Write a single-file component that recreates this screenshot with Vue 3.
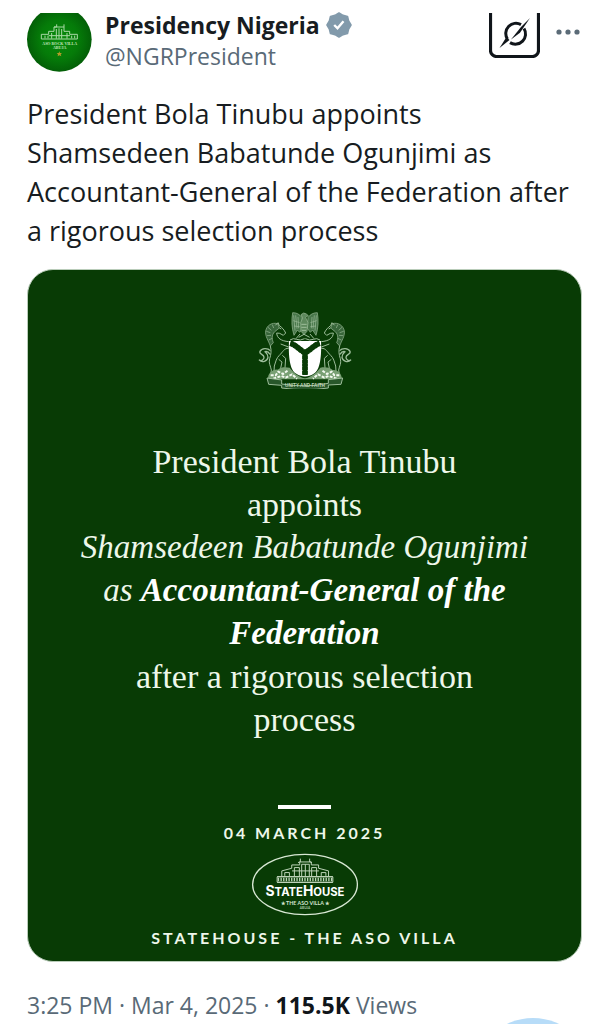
<template>
  <main class="page">
    <article>
      <header class="header">
        <svg class="avatar" viewBox="0 18 195 177" role="img" aria-label="Presidency Nigeria avatar">
          <defs>
            <radialGradient id="avatar-green">
              <stop offset="0" stop-color="#078b0b" />
              <stop offset="0.6" stop-color="#057b09" />
              <stop offset="1" stop-color="#035f07" />
            </radialGradient>
          </defs>
          <circle cx="97" cy="97" r="97" fill="url(#avatar-green)" />
          <g fill="none" stroke="#a9d8a5" stroke-width="3">
            <path d="M43 96V82h22v-9h16V60h8v-8M81 60h30V52M111 60v13h17v9h23v14" />
            <path d="M88 95V66M96 95V64M104 95V66M74 95V78M120 95V78M54 94v-8M63 94v-8M134 94v-8M143 94v-8" />
            <path d="M43 96h108M65 86h64" />
          </g>
          <text class="avatar-text" x="98" y="113">ASO ROCK VILLA</text>
          <text class="avatar-text" x="98" y="127">ABUJA</text>
          <path d="M97 133l2 5h6l-4 4 2 6-6-3-5 3 1-6-4-4h6z" fill="#b59a2a" />
        </svg>
        <div class="author">
          <div class="name-row">
            <strong class="name">Presidency Nigeria</strong>
            <svg class="badge" viewBox="0 0 26 26" role="img" aria-label="Verified">
              <path
                d="M13 1 17 3.4 21.5 4.5 22.6 9 25 13 22.6 17 21.5 21.5 17 22.6 13 25 9 22.6 4.5 21.5 3.4 17 1 13 3.4 9 4.5 4.5 9 3.4z"
                fill="#829aab" stroke="#829aab" stroke-width="1.6" stroke-linejoin="round"
              />
              <path d="m8.2 13 3.3 3.3 6-7" fill="none" stroke="#fff" stroke-width="2.4" />
            </svg>
          </div>
          <a class="handle" href="#">@NGRPresident</a>
        </div>
        <button class="icon-button" type="button" aria-label="Explain this post">
          <svg class="grok" viewBox="0 6 51 45">
            <rect x="1.5" y="-9" width="48" height="58.5" rx="6" fill="none" stroke="#10151a" stroke-width="3.2" />
            <path d="M32 17.6A10.2 10.2 0 0 0 18.4 32" fill="none" stroke="#10151a" stroke-width="3" />
            <path d="M35 21.5A10.2 10.2 0 0 1 21 35.6" fill="none" stroke="#10151a" stroke-width="3" />
            <path d="M41 11 31 25.8 22 32.5 32 20z" fill="#10151a" />
            <path d="M10.5 41 17.5 30 20.5 33z" fill="#10151a" />
          </svg>
        </button>
        <button class="icon-button more" type="button" aria-label="More">
          <svg class="dots" viewBox="0 0 24 6">
            <circle v-for="x in [3, 12, 21]" :key="x" :cx="x" cy="3" r="2.6" fill="#5b6b77" />
          </svg>
        </button>
      </header>

      <p class="text">
        President Bola Tinubu appoints<br />Shamsedeen Babatunde Ogunjimi as<br />Accountant-General of the Federation after<br />a rigorous selection process
      </p>

      <section class="card">
        <svg class="arms" viewBox="54 33 282 234" role="img" aria-label="Coat of arms of Nigeria">
          <g fill="none" stroke="#9dbd9a" stroke-width="3" stroke-linejoin="round">
            <!-- horses and wings, the right half mirrors the left -->
            <g v-for="side in sides" :key="side.name" :transform="side.transform">
              <path d="M186 52c-8-10-17-14-28-14-4 22-3 46 4 68l10-16 7 7 9-12z" fill="#48774a" stroke-width="2" />
              <path d="M161 46l4 46M167 46l4 40M174 51l2 34M160 62l19 6M162 78l17 2" stroke-width="2" />
              <path d="M180 102l-12 14M150 120q10-7 20-2t24-2" />
              <path d="M113 71c-18-5-33 6-36 22-2 16 8 28 14 45l9-10c-6-14-4-28 8-36l10-8z" fill="#38663a" stroke-width="2" />
              <path d="M84 82l10 9M79 94l12 4M81 107l12-1M86 120l11-5M97 74l4 10" stroke-width="2" />
              <path d="M106 76l8-8 4 9c8 5 15 13 19 22l-7 7-11-6-9-1c1 16 14 24 36 26M91 138c4 14 2 26-2 38-4 14 3 22 5 34l-3 20M146 145c-14-1-18 12-28 21-9 8-11 20-15 32l-2 32" />
              <path d="M118 84l6 3M127 166l10 9-2 28-6 16M116 178l10 8-6 28M122 132l24 9" />
              <path d="M91 152c-8-9-26-8-31 2-4 10 12 8 12 18 0 8-8 12-14 8 8 9 24 4 26-8 1-10-6-14-9-17 7-2 12 3 15 8" stroke-width="4" />
            </g>
            <path d="M183 44q8-9 16-2l6 5-8 5 7 16-3 26-9 10-9-10-1-26 6-14z" fill="#5e895d" stroke-width="2" />
            <path d="M184 73h16M184 82h16M186 91h12M176 112l16-9 17 9" />
          </g>
          <path d="M147 123h96c2 45-2 88-22 98-16 11-36 11-52 0-20-10-24-53-22-98z" fill="#fff" />
          <path d="M151 130c17 5 24 16 44 29 20-13 29-24 44-29M195 157v68" fill="none" stroke="#083b05" stroke-width="17" stroke-dasharray="10 1" />
          <path d="M151 130c17 5 24 16 44 29 20-13 29-24 44-29M195 157v68" fill="none" stroke="#083b05" stroke-width="14" />
          <!-- flowered ground -->
          <path d="M85 238c-4-16 13-31 28-29 11-9 24-8 36-6 9 12 23 27 46 32 23-5 37-20 46-32 15-2 28-1 37 7 15-2 29 12 27 28z" fill="#789f73" />
          <path d="M92 226h15l8-11 14 7 15-11M100 236l24-8 13 5 19-10 15 13M298 226h-15l-8-11-14 7-15-11M290 236l-24-8-13 5-19-10-15 13" fill="none" stroke="#f4faf1" stroke-width="6" stroke-dasharray="9 4" />
          <path d="M81 234l44 6v12q69 12 140-2v-11l43-5-5 19-38 2v9q-70 10-140 0v-8l-39-3z" fill="#28572a" stroke="#9dbd9a" stroke-width="3" />
          <text class="motto" x="195" y="261">UNITY AND FAITH</text>
        </svg>

        <p class="statement">
          President Bola Tinubu<br />appoints
          <em>Shamsedeen Babatunde Ogunjimi<br />as <strong>Accountant-General of the<br />Federation</strong></em>
          after a rigorous selection<br />process
        </p>

        <div class="rule"></div>
        <time class="label date" datetime="2025-03-04">04 MARCH 2025</time>

        <svg class="statehouse" viewBox="33 189 324 190" role="img" aria-label="StateHouse, The Aso Villa, Abuja">
          <ellipse cx="195" cy="284" rx="158" ry="91" fill="none" stroke="#d8e8d4" stroke-width="4" />
          <g fill="none" stroke="#bdd4b8" stroke-width="3">
            <path d="M111 277v-16h168v16zM125 260v-17l30-8v-10h24v-9h35v9h22v10l30 8v17" />
            <path d="M181 216v-10M209 216v-10M174 218l7-3M216 218l-7-3" />
            <path d="M163 260v-27h15v27M185 260v-37h23v37M215 260v-27h15v27M196 223v37M134 258v-10h14v10M244 258v-10h14v10M156 243h81" />
            <path d="M113 269h164" stroke-width="11" stroke-dasharray="4 4" />
            <path d="M111 278h168M111 260h168" />
          </g>
          <text class="brand" x="195" y="320"><tspan class="brand-cap">S</tspan>TATE<tspan class="brand-cap">H</tspan>OUSE</text>
          <text class="villa" x="195" y="345">★ THE ASO VILLA ★</text>
          <text class="abuja" x="195" y="358">ABUJA</text>
        </svg>

        <p class="label place">STATEHOUSE - THE ASO VILLA</p>
      </section>

      <footer class="meta">3:25 PM · Mar 4, 2025 · <strong>115.5K</strong> Views</footer>
    </article>
    <button class="compose" type="button" aria-label="Compose"></button>
  </main>
</template>

<script setup>
const sides = [
  { name: 'left', transform: '' },
  { name: 'right', transform: 'translate(390 0) scale(-1 1)' }
];
</script>

<style>
body {
  margin: 0;
  background: #fff;
  overflow: hidden;
}
</style>

<style scoped>
.page {
  padding: 13px 27px 0;
  font-family: "Open Sans", "Liberation Sans", sans-serif;
  color: #171c21;
}
.header {
  display: flex;
  align-items: flex-start;
}
.avatar { width: 65px; height: 59px; flex: none; }
.avatar-text {
  font: bold 12px "Liberation Serif", serif;
  fill: #c4e6bd;
  text-anchor: middle;
}
.author {
  flex: 1;
  min-width: 0;
  padding-left: 13px;
}
.name-row {
  display: flex;
  align-items: center;
  gap: 6px;
  height: 24px;
}
.name {
  font-size: 23px;
  line-height: 24px;
  font-weight: 700;
  white-space: nowrap;
}
.badge { width: 26px; height: 26px; flex: none; }
.handle {
  display: block;
  margin-top: 3px;
  font-size: 23px;
  line-height: 32px;
  color: #596a77;
  text-decoration: none;
}
.icon-button {
  display: flex;
  border: 0;
  padding: 0;
  background: none;
}
.grok { width: 51px; height: 45px; }
.more { padding: 16px 2px 0 16px; }
.dots { width: 24px; height: 6px; }
.text {
  margin: 22px 0 0;
  font-size: 27px;
  line-height: 39px;
}
.card {
  display: flex;
  flex-direction: column;
  align-items: center;
  box-sizing: border-box;
  margin-top: 19px;
  padding: 41px 20px 13px;
  border: 1px solid #b9ccb9;
  border-radius: 26px;
  background: #083b05;
  color: #eef7ea;
  text-align: center;
}
.arms { width: 94px; height: 78px; }
.motto {
  font: bold 14px "Liberation Sans", sans-serif;
  fill: #bed3b9;
  text-anchor: middle;
}
.statement {
  margin: 51px 0 0;
  font-family: "Liberation Serif", serif;
  font-size: 34px;
  line-height: 43px;
  white-space: nowrap;
}
.statement em { display: block; font-size: 33px; }
.statement strong { color: #fff; }
.rule {
  width: 53px;
  height: 4px;
  margin-top: 64px;
  background: #fff;
}
.label {
  font-family: Lato, sans-serif;
  font-size: 16px;
  line-height: 20px;
  font-weight: 700;
  letter-spacing: 3px;
}
.date { margin-top: 14px; }
.place { margin: 12px 0 0; }
.statehouse { width: 108px; height: 63px; margin-top: 10px; }
.brand {
  font: bold 34px Inter, sans-serif;
  fill: #fff;
  text-anchor: middle;
}
.brand-cap { font-size: 42px; }
.villa {
  font: bold 16px Lato, sans-serif;
  fill: #d4e4d0;
  text-anchor: middle;
}
.abuja {
  font: bold 10px Lato, sans-serif;
  fill: #a9c3a5;
  text-anchor: middle;
}
.meta {
  margin-top: 27px;
  font-size: 23px;
  line-height: 32px;
  color: #596a77;
}
.meta strong { color: #10151a; }
.compose {
  position: fixed;
  right: 16px;
  bottom: -114px;
  width: 120px;
  height: 120px;
  border: 0;
  border-radius: 50%;
  background: #b7dcf8;
}
</style>
